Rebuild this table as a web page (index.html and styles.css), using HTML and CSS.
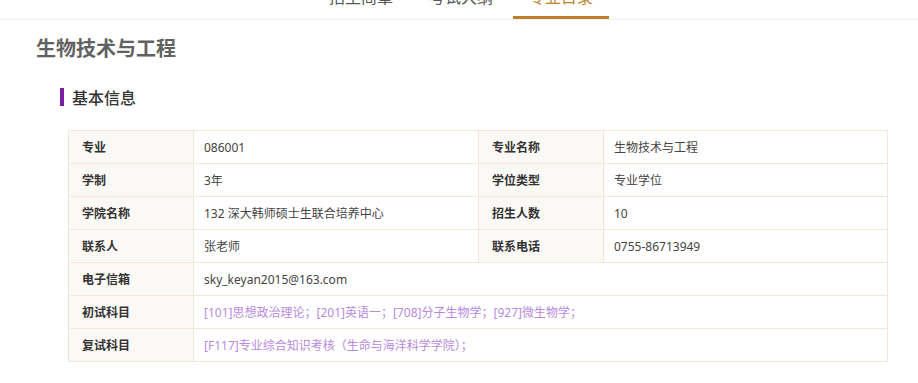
FILE: index.html
```html
<!DOCTYPE html>
<html lang="zh-CN">
<head>
<meta charset="utf-8">
<title>生物技术与工程</title>
<link rel="stylesheet" href="styles.css">
</head>
<body>
<nav class="tabs">
  <a class="tab">招生简章</a>
  <a class="tab">考试大纲</a>
  <a class="tab active">专业目录</a>
</nav>
<main class="page">
  <h1 class="title">生物技术与工程</h1>
  <section class="section">
    <h2 class="section-head">基本信息</h2>
    <table class="info">
      <colgroup>
        <col class="c-label"><col class="c-value"><col class="c-label"><col class="c-value2">
      </colgroup>
      <tr><th>专业</th><td>086001</td><th>专业名称</th><td>生物技术与工程</td></tr>
      <tr><th>学制</th><td>3年</td><th>学位类型</th><td>专业学位</td></tr>
      <tr><th>学院名称</th><td>132 深大韩师硕士生联合培养中心</td><th>招生人数</th><td>10</td></tr>
      <tr><th>联系人</th><td>张老师</td><th>联系电话</th><td>0755-86713949</td></tr>
      <tr><th>电子信箱</th><td colspan="3">sky_keyan2015@163.com</td></tr>
      <tr><th>初试科目</th><td colspan="3" class="subj">[101]思想政治理论；[201]英语一；[708]分子生物学；[927]微生物学；</td></tr>
      <tr><th>复试科目</th><td colspan="3" class="subj">[F117]专业综合知识考核（生命与海洋科学学院）；</td></tr>
    </table>
  </section>
</main>
</body>
</html>
```

FILE: styles.css
```css
html, body {
  margin: 0;
  padding: 0;
  background: #fff;
  font-family: "Noto Sans", "Noto Sans CJK SC", sans-serif;
  color: #333;
}

.tabs {
  display: flex;
  justify-content: center;
  gap: 4px;
  margin-top: -24px;
  border-bottom: 1px solid #f5f0eb;
  padding-left: 4px;
}

.tab {
  width: 96px;
  height: 40px;
  line-height: 40px;
  text-align: center;
  font-size: 16px;
  color: #555;
  border-bottom: 3px solid transparent;
  font-family: "Noto Sans CJK SC", sans-serif;
}

.tab.active {
  color: #c0832f;
  border-bottom-color: #bd7f2e;
}

.page {
  padding: 0 0 0 36px;
}

.title {
  margin: 0;
  padding-top: 14px;
  font-size: 20px;
  line-height: 28px;
  font-weight: 700;
  color: #626262;
  font-family: "Noto Sans CJK SC", sans-serif;
}

.section {
  padding-left: 24px;
}

.section-head {
  margin: 26px 0 0;
  font-size: 16px;
  line-height: 18px;
  font-weight: 500;
  color: #333;
  border-left: 4px solid #7b1fa2;
  padding-left: 8px;
  font-family: "Noto Sans CJK SC", sans-serif;
}

.info {
  margin: 24px 0 0 8px;
  width: 819px;
  border-collapse: collapse;
  table-layout: fixed;
  font-size: 12px;
}

.c-label { width: 125px; }
.c-value { width: 285px; }
.c-value2 { width: 284px; }

.info th,
.info td {
  border: 1px solid #f4e6d8;
  height: 33px;
  padding: 0 10px;
  box-sizing: border-box;
  text-align: left;
  vertical-align: middle;
  font-family: "Noto Sans", "Noto Sans CJK SC", sans-serif;
}

.info th {
  background: #fbf9f6;
  font-weight: 700;
  color: #333;
  padding-left: 13px;
}

.info td {
  color: #444;
}

.info td.subj {
  color: #b88ade;
}
```
